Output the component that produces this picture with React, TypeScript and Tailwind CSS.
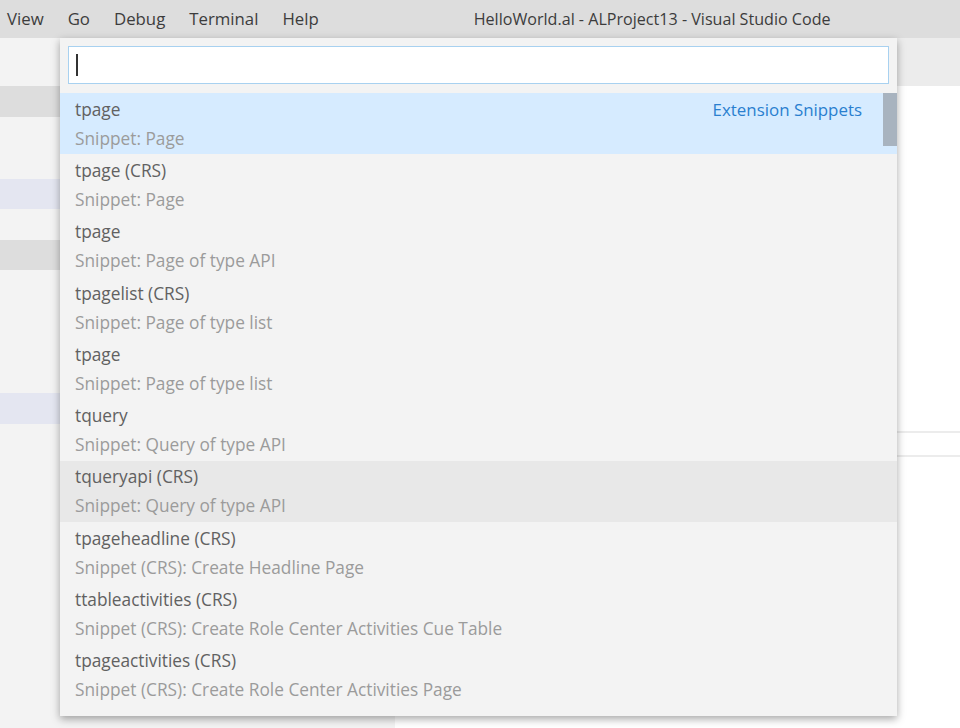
import React from "react";

const items = [
  { label: "tpage", detail: "Snippet: Page", selected: true },
  { label: "tpage (CRS)", detail: "Snippet: Page" },
  { label: "tpage", detail: "Snippet: Page of type API" },
  { label: "tpagelist (CRS)", detail: "Snippet: Page of type list" },
  { label: "tpage", detail: "Snippet: Page of type list" },
  { label: "tquery", detail: "Snippet: Query of type API" },
  { label: "tqueryapi (CRS)", detail: "Snippet: Query of type API", hover: true },
  { label: "tpageheadline (CRS)", detail: "Snippet (CRS): Create Headline Page" },
  { label: "ttableactivities (CRS)", detail: "Snippet (CRS): Create Role Center Activities Cue Table" },
  { label: "tpageactivities (CRS)", detail: "Snippet (CRS): Create Role Center Activities Page" },
];

export default function App() {
  return (
    <div
      className="relative w-[960px] h-[728px] overflow-hidden bg-white text-[#333]"
      style={{ fontFamily: '"Open Sans", "Noto Sans", sans-serif' }}
    >
      {/* title bar */}
      <div className="h-[38px] bg-[#dddddd] flex items-center text-[#3c3c3c]">
        <div className="flex items-center pl-[7px] text-[16.8px]">
          <span>View</span>
          <span className="ml-[24px]">Go</span>
          <span className="ml-[24px]">Debug</span>
          <span className="ml-[24px]">Terminal</span>
          <span className="ml-[24px]">Help</span>
        </div>
        <div className="ml-[155px] text-[16.1px]">HelloWorld.al - ALProject13 - Visual Studio Code</div>
      </div>

      {/* workbench */}
      <div className="flex h-[690px]">
        <div className="w-[395px] bg-[#f3f3f3] flex flex-col">
          <div className="h-[48px]" />
          <div className="h-[31px] bg-[#dddddd]" />
          <div className="h-[62px]" />
          <div className="h-[30px] bg-[#e4e6f1]" />
          <div className="h-[31px]" />
          <div className="h-[30px] bg-[#dddddd]" />
          <div className="h-[123px]" />
          <div className="h-[31px] bg-[#e4e6f1]" />
        </div>
        <div className="flex-1 flex flex-col">
          <div className="h-[48px] bg-[#ececec]" />
          <div className="h-[345px]" />
          <div className="h-[2px] bg-[#ececec]" />
          <div className="h-[22px]" />
          <div className="h-[2px] bg-[#ececec]" />
        </div>
      </div>

      {/* quick pick */}
      <div className="absolute left-[60px] top-[38px] w-[837px] h-[678px] bg-[#f3f3f3] shadow-[0_3px_8px_rgba(0,0,0,0.35)]">
        <div className="px-[8px] pt-[8px] pb-[9px]">
          <div className="h-[38px] bg-white border border-[#a8d1f0] flex items-center pl-[7px]">
            <div className="w-[2px] h-[22px] bg-[#333]" />
          </div>
        </div>
        <div className="relative">
          {items.map((it, i) => (
            <div
              key={i}
              className={`h-[61.3px] flex flex-col justify-center pl-[15px] pr-[35px] ${
                it.selected ? "bg-[#d6ebff]" : it.hover ? "bg-[#e8e8e8]" : ""
              }`}
            >
              <div className="flex items-center justify-between text-[17.3px] leading-[29px] text-[#616161]">
                <span>{it.label}</span>
                {it.selected && <span className="text-[16.9px] text-[#2a7fcf]">Extension Snippets</span>}
              </div>
              <div className="text-[17.3px] leading-[29px] text-[#9b9b9b]">{it.detail}</div>
            </div>
          ))}
          <div className="absolute right-0 top-0 w-[14px] h-[53px] bg-[#a8b3bf]" />
        </div>
      </div>
    </div>
  );
}
